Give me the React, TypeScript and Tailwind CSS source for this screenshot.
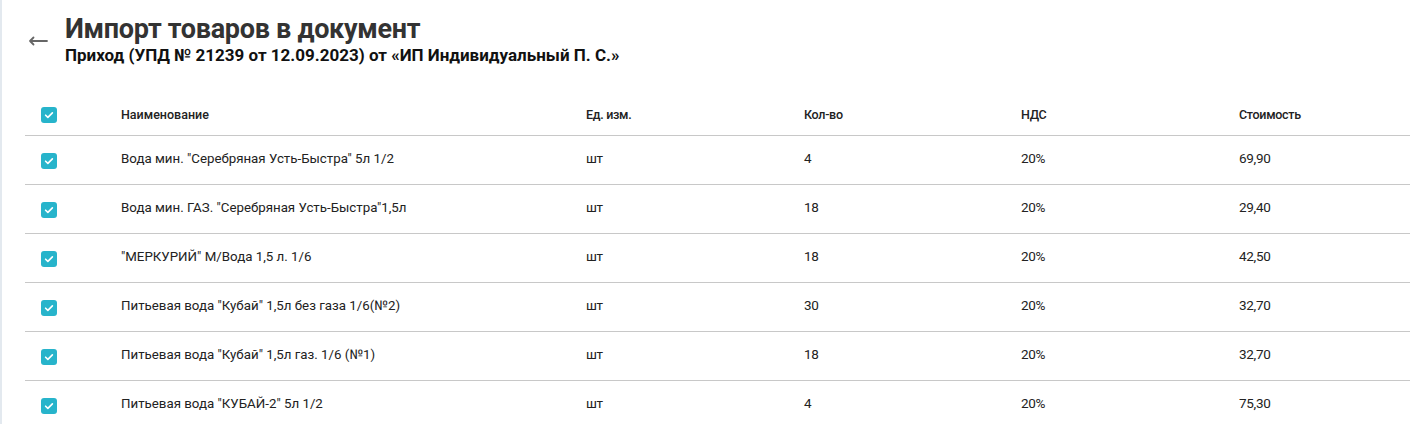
import React from 'react';

type Row = { name: string; unit: string; qty: string; vat: string; cost: string };

const rows: Row[] = [
  { name: 'Вода мин. "Серебряная Усть-Быстра" 5л 1/2', unit: 'шт', qty: '4', vat: '20%', cost: '69,90' },
  { name: 'Вода мин. ГАЗ. "Серебряная Усть-Быстра"1,5л', unit: 'шт', qty: '18', vat: '20%', cost: '29,40' },
  { name: '"МЕРКУРИЙ" М/Вода 1,5 л. 1/6', unit: 'шт', qty: '18', vat: '20%', cost: '42,50' },
  { name: 'Питьевая вода "Кубай" 1,5л без газа 1/6(№2)', unit: 'шт', qty: '30', vat: '20%', cost: '32,70' },
  { name: 'Питьевая вода "Кубай" 1,5л газ. 1/6 (№1)', unit: 'шт', qty: '18', vat: '20%', cost: '32,70' },
  { name: 'Питьевая вода "КУБАЙ-2" 5л 1/2', unit: 'шт', qty: '4', vat: '20%', cost: '75,30' },
];

const grid = 'grid grid-cols-[96px_465px_218px_217px_218px_1fr] items-center';

const Check = () => (
  <span className="flex h-4 w-4 items-center justify-center rounded-[3px] bg-[#27b4cb]">
    <svg viewBox="0 0 16 16" className="h-3 w-3" fill="none" stroke="white" strokeWidth="2.2" strokeLinecap="round" strokeLinejoin="round">
      <path d="M3.5 8.3l3 2.9 6-6" />
    </svg>
  </span>
);

export default function App() {
  return (
    <div className="min-h-[424px] w-[1410px] overflow-hidden border-l-2 border-[#e3e9ef] bg-white font-['Roboto','Liberation_Sans',sans-serif] text-[#333]">
      <div className="flex items-start pl-[26px] pt-[13px]">
        <span className="mt-[23px] w-[37px]">
          <svg width="20" height="10" viewBox="0 0 20 10" fill="none" stroke="#666" strokeWidth="1.8" strokeLinecap="round" strokeLinejoin="round">
            <path d="M19 5H2M5.5 1.5L2 5l3.5 3.5" />
          </svg>
        </span>
        <div>
          <h1 className="text-[27px] font-bold leading-[32px] tracking-[-0.3px] text-[#333]">Импорт товаров в документ</h1>
          <p className="text-[17px] font-bold leading-[21px] text-[#111]">
            Приход (УПД № 21239 от 12.09.2023) от «ИП Индивидуальный П. С.»
          </p>
        </div>
      </div>

      <div className="ml-[23px] mt-[24px]">
        <div className={`${grid} h-[46px] border-b border-[#c8c8c8] pt-[5px] text-[12.5px] font-medium text-[#222]`}>
          <div className="pl-4"><Check /></div>
          <div>Наименование</div>
          <div className="tracking-[-0.3px]">Ед. изм.</div>
          <div className="tracking-[-0.3px]">Кол-во</div>
          <div className="tracking-[-0.3px]">НДС</div>
          <div className="tracking-[-0.3px]">Стоимость</div>
        </div>
        {rows.map((r, i) => (
          <div key={i} className={`${grid} h-[49px] border-b border-[#c8c8c8] text-[#222]`}>
            <div className="pl-4 pt-[1px]"><Check /></div>
            <div className="pb-[3px] text-[13.3px]">{r.name}</div>
            <div className="pb-[3px] text-[13.5px] tracking-[-0.3px]">{r.unit}</div>
            <div className="pb-[3px] text-[13.5px] tracking-[-0.3px]">{r.qty}</div>
            <div className="pb-[3px] text-[13.5px] tracking-[-0.3px]">{r.vat}</div>
            <div className="pb-[3px] text-[13.5px] tracking-[-0.3px]">{r.cost}</div>
          </div>
        ))}
      </div>
    </div>
  );
}
